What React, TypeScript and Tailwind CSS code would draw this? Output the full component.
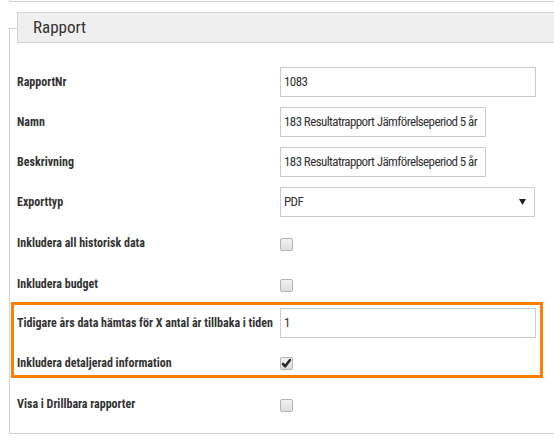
import { useState } from "react";

interface Row {
  label: string;
  kind: "text" | "select" | "check";
  value?: string;
  width?: string;
  checked?: boolean;
  height: string;
}

const rows: Row[] = [
  { label: "RapportNr", kind: "text", value: "1083", width: "w-[256px]", height: "h-[40px]" },
  { label: "Namn", kind: "text", value: "183 Resultatrapport Jämförelseperiod 5 år", width: "w-[206px]", height: "h-[40px]" },
  { label: "Beskrivning", kind: "text", value: "183 Resultatrapport Jämförelseperiod 5 år", width: "w-[206px]", height: "h-[40px]" },
  { label: "Exporttyp", kind: "select", value: "PDF", height: "h-[40px]" },
  { label: "Inkludera all historisk data", kind: "check", height: "h-[42px]" },
  { label: "Inkludera budget", kind: "check", height: "h-[40px]" },
  { label: "Tidigare års data hämtas för X antal år tillbaka i tiden", kind: "text", value: "1", width: "w-[256px]", height: "h-[37px]" },
  { label: "Inkludera detaljerad information", kind: "check", checked: true, height: "h-[43px]" },
  { label: "Visa i Drillbara rapporter", kind: "check", height: "h-[40px]" },
];

const Checkbox = ({ checked }: { checked?: boolean }) => (
  <div className="w-[13px] h-[13px] rounded-[2px] border border-[#b4b4b4] bg-gradient-to-b from-[#f2f2f2] to-[#dedede] flex items-center justify-center">
    {checked && (
      <svg width="11" height="11" viewBox="0 0 11 11">
        <path d="M2 6 L4.2 8.3 L9 2" fill="none" stroke="#2a2a2a" strokeWidth="2.6" strokeLinecap="round" strokeLinejoin="round" />
      </svg>
    )}
  </div>
);

const App = () => {
  const [values] = useState(rows);

  return (
    <div className="relative w-[554px] h-[440px] overflow-hidden bg-white text-[#333] font-['Roboto_Condensed','Liberation_Sans_Narrow',Roboto,sans-serif] font-stretch-condensed">
      {/* previous panel edge */}
      <div className="ml-[9px] w-[700px] h-[2px] border-l border-b border-[#d3d3d3]" />

      {/* Rapport fieldset */}
      <div className="ml-[9px] mt-[26px] w-[700px] h-[406px] border-l border-t border-b border-[#d3d3d3]">
        <div className="-mt-[17px] ml-[7px] h-[31px] border border-[#d3d3d3] bg-[#efefef] flex items-center pl-[15px]">
          <span className="text-[17px] text-[#333]">Rapport</span>
        </div>

        <div className="pt-[19px] pl-[7px]">
          {values.map((row) => (
            <div key={row.label} className={`flex items-center ${row.height}`}>
              <div className="w-[263px] text-[12px] font-bold whitespace-nowrap">
                {row.label}
              </div>
              {row.kind === "text" && (
                <div className={`${row.width} h-[30px] border border-[#cccccc] flex items-center pl-[3px] text-[13px] tracking-[-0.6px] whitespace-nowrap overflow-hidden`}>
                  {row.value}
                </div>
              )}
              {row.kind === "select" && (
                <div className="w-[255px] h-[30px] border border-[#cccccc] flex items-center justify-between pl-[3px] pr-[8px] text-[13px] tracking-[-0.6px]">
                  <span>{row.value}</span>
                  <svg width="7" height="6" viewBox="0 0 7 6">
                    <path d="M0 0 H7 L3.5 6 Z" fill="#222" />
                  </svg>
                </div>
              )}
              {row.kind === "check" && (
                <div className="mt-[2px]">
                  <Checkbox checked={row.checked} />
                </div>
              )}
            </div>
          ))}
        </div>
      </div>

      {/* highlight */}
      <div className="absolute left-[11px] top-[302px] w-[532px] h-[76px] border-[3px] border-[#ff8000]" />
    </div>
  );
};

export default App;
